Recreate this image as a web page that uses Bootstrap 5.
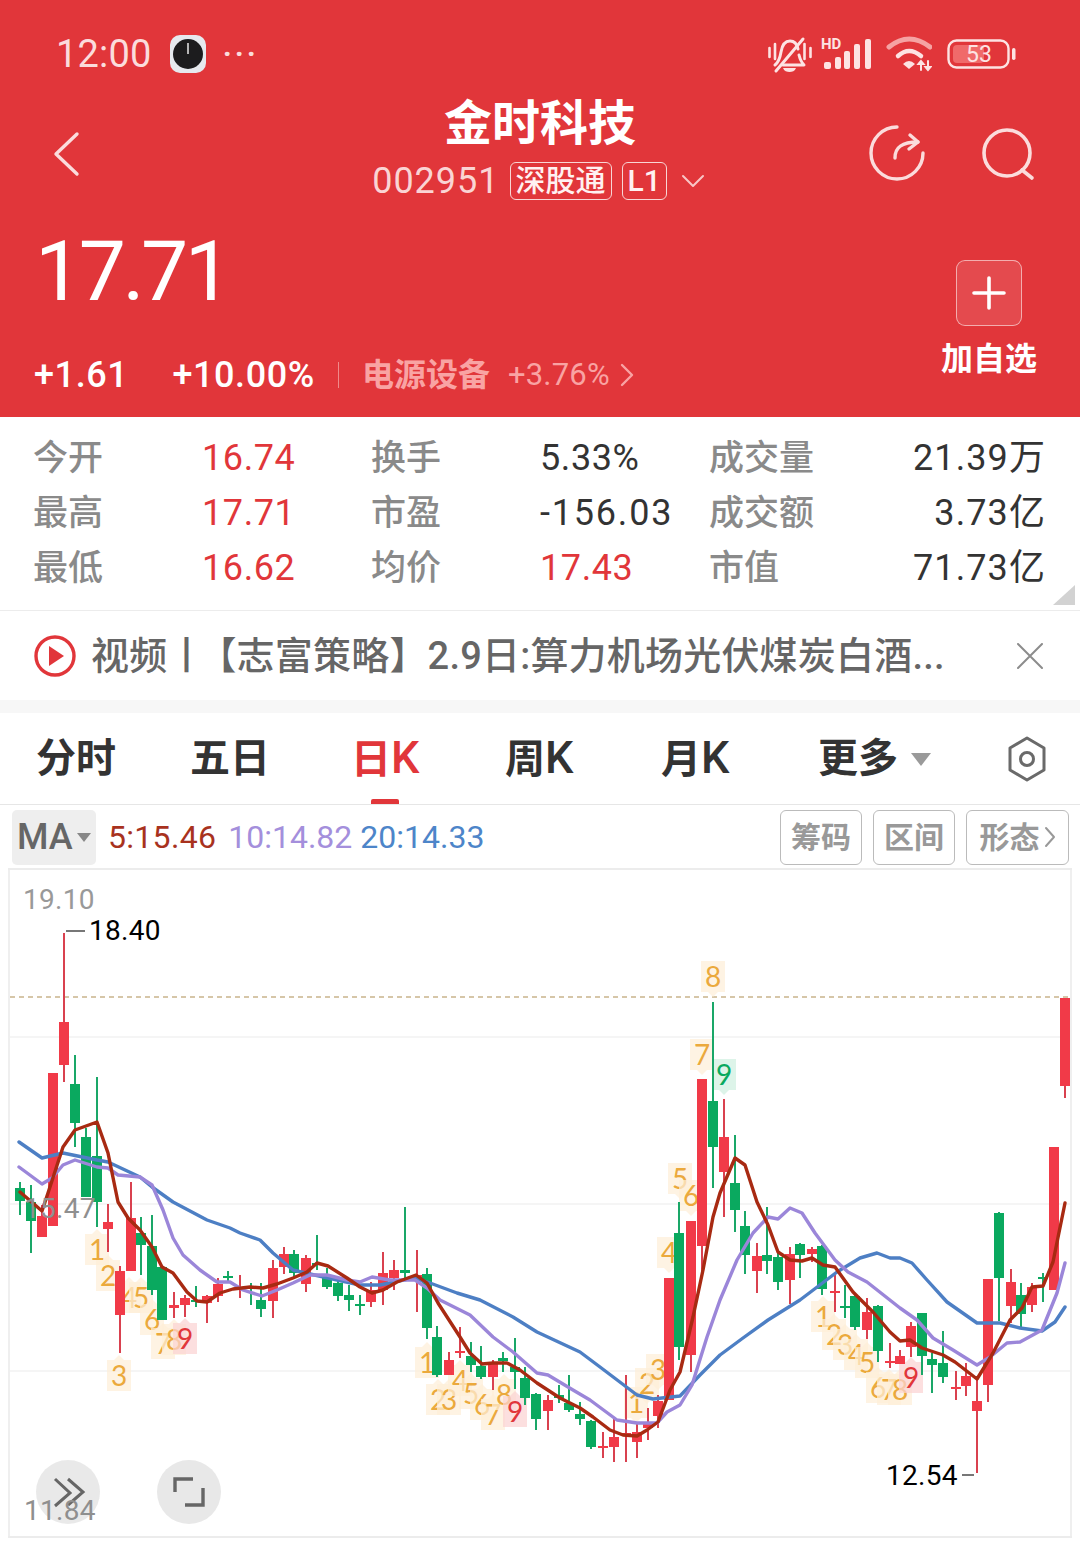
<!DOCTYPE html>
<html lang="zh-CN">
<head>
  <meta charset="UTF-8">
  <title>金时科技 002951</title>
  <meta name="viewport" content="width=device-width, initial-scale=1">
  <link href="https://cdn.jsdelivr.net/npm/bootstrap@5.3.0/dist/css/bootstrap.min.css" rel="stylesheet">
  <style>
    body { margin: 0; width: 1080px; height: 1543px; overflow: hidden; background: #fff;
      font-family: Roboto, "Noto Sans CJK SC", sans-serif; }
    svg { display: block; flex: none; }
    .head-wrap { height: 417px; background: #e1363a; color: #fff; }
    .status-row { height: 103px; padding: 5px 64px 0 56px; color: #fbdcdc; }
    .status-time { font-size: 38px; line-height: 1; letter-spacing: .2px; margin-right: 18px; }
    .status-dots { font-size: 30px; line-height: 1; letter-spacing: 3px; margin-left: 17px; font-weight: 700; }
    .clock-ico { width: 36px; height: 38px; background: #e6e9ee; border-radius: 10px; }
    .batt-ico { margin-left: 14px; }
    .nav-row { height: 102px; padding: 0 44px 0 52px; }
    .nav-side { width: 170px; }
    .nav-btns { gap: 56px; }
    .nav-mid { flex: 1; text-align: center; }
    .stock-name { font-size: 48px; font-weight: 700; line-height: 50px; margin: -8px 0 11px; padding-right: 8px; }
    .sub-row { height: 42px; gap: 10px; padding-right: 11px; color: #fad4d4; }
    .stock-code { font-size: 36px; letter-spacing: 1px; line-height: 1; }
    .tag-box { border: 1px solid #f8d5d5; border-radius: 6px; height: 38px; padding: 0 5px;
      font-size: 30px; line-height: 35px; color: #fff1f1; font-weight: 500; }
    .price-wrap { height: 212px; padding: 0 42px 0 34px; }
    .price-big { font-size: 84px; line-height: 1; letter-spacing: -3.5px; margin: 25px 0 0 1px; }
    .change-row { height: 42px; margin-top: 40px; }
    .chg-a { font-size: 36px; line-height: 42px; letter-spacing: .6px; font-weight: 500; }
    .chg-first { margin-right: 44px; }
    .chg-sep { width: 1px; height: 26px; background: #f08a8a; margin: 0 23px; }
    .plate-name { font-size: 32px; font-weight: 700; color: #f9a3a3; line-height: 42px; margin-right: 18px; }
    .plate-pct { font-size: 31px; color: #f9a3a3; line-height: 42px; margin-right: 10px; letter-spacing: .2px; }
    .add-box { width: 96px; padding-top: 55px; margin-right: 1px; }
    .add-btn { width: 66px; height: 66px; background: rgba(255,255,255,.1); border: 1px solid rgba(255,255,255,.55);
      border-radius: 9px; }
    .add-text { font-size: 32px; font-weight: 700; line-height: 34px; margin-top: 16px; white-space: nowrap; }
    .stat-wrap { position: relative; height: 194px; padding: 14px 0 0 33px; border-bottom: 1px solid #ececec; }
    .stat-row { height: 55px; }
    .stat-lab { width: 169px; font-size: 35px; font-weight: 500; color: #8a8a8a; line-height: 55px; }
    .stat-val { width: 169px; font-size: 36px; color: #333; line-height: 55px; letter-spacing: .6px; }
    .stat-wide { letter-spacing: 1.8px; }
    .stat-end { width: 169px; text-align: right; font-size: 36px; color: #333; line-height: 55px; letter-spacing: 1.1px; white-space: nowrap; }
    .stat-end-lab { width: 168px; }
    .stat-red { color: #e1363a; }
    .fold-mark { position: absolute; right: 5px; bottom: 5px; width: 22px; height: 20px; background: #d2d2d2;
      clip-path: polygon(100% 0, 100% 100%, 0 100%); }
    .news-row { height: 89px; padding: 0 37px 0 34px; }
    .news-text { flex: 1; font-size: 38px; font-weight: 500; color: #666; margin-left: 15px; white-space: nowrap; line-height: 92px; letter-spacing: .2px; }
    .news-bar { letter-spacing: -7px; }
    .band-gap { height: 13px; background: #f7f7f7; }
    .tabs-row { position: relative; height: 92px; border-bottom: 1px solid #e6e6e6; padding-left: 36px; }
    .tab-item { font-size: 40px; font-weight: 700; color: #333; line-height: 90px; width: 154px; white-space: nowrap; }
    .tab-k { font-size: 45px; font-weight: 500; }
    .tab-on { color: #e1363a; margin-left: 7px; }
    .tab-moon { margin-left: 2px; }
    .tab-more { width: 189px; margin-left: 3px; }
    .tab-tri { margin-left: 12px; }
    .tab-bar { position: absolute; left: 371px; bottom: 0; width: 28px; height: 5px; background: #e1363a; border-radius: 2px 2px 0 0; }
    .ma-row { height: 63px; padding: 4px 11px 3px 12px; }
    .ma-btn { width: 84px; height: 55px; background: #eee; border-radius: 5px; color: #666; font-size: 36px; font-weight: 500; line-height: 55px; padding-left: 5px; }
    .ma-vals { flex: 1; font-size: 32px; margin-left: 12px; line-height: 55px; }
    .ma-five { color: #a8321e; margin-right: 12px; letter-spacing: .3px; }
    .ma-ten { color: #a48fdc; margin-right: 8px; }
    .ma-twenty { color: #4d85c9; }
    .tool-btn { height: 55px; border: 1px solid #bbb; border-radius: 6px; color: #999; font-size: 30px; font-weight: 700; line-height: 53px; text-align: center; width: 82px; margin-left: 11px; white-space: nowrap; }
    .tool-wide { width: 103px; }
    .chart-area { height: 675px; }
    .num-tag { font-family: Lato, Roboto, sans-serif; font-size: 28px; }
    .axis-txt { font-family: Roboto, sans-serif; font-size: 28px; letter-spacing: .3px; }
  </style>
</head>
<body>
  <div class="head-wrap">
    <!-- status bar -->
    <div class="status-row d-flex align-items-center">
      <span class="status-time">12:00</span>
      <span class="clock-ico d-flex align-items-center justify-content-center">
        <svg width="30" height="30" viewBox="0 0 30 30"><circle cx="15" cy="15" r="15" fill="#1c1c1e"/><path d="M15 4v11" stroke="#ddd" stroke-width="1.6"/></svg>
      </span>
      <span class="status-dots">···</span>
      <span class="ms-auto d-flex align-items-center">
        <svg width="44" height="40" viewBox="0 0 44 40" fill="none" stroke="#fde3e3" stroke-width="3" stroke-linecap="round" stroke-linejoin="round">
          <path d="M7 31c4-3 5-7 6-13 1-6 4-11 9-11 4 0 7 3 8 8M31 21c1 4 2 7 5 10H15"/><path d="M35 5 8 37"/>
          <path d="M15 34h13c-1 3-4 4-6.500 4s-5.500-1-6.500-4z" fill="#fde3e3" stroke="none"/>
          <path d="M1.500 14v9M7 10v15M36.500 10v15M42.500 14v9" stroke-width="2.600"/>
        </svg>
        <svg class="ms-2" width="56" height="40" viewBox="0 0 56 40">
          <text x="1" y="15" font-size="15" font-weight="700" fill="#fde3e3" font-family="Roboto, sans-serif">HD</text>
          <g fill="#fde3e3"><rect x="4" y="28" width="7" height="7" rx="2"/><rect x="15" y="23" width="6" height="12" rx="2"/><rect x="24" y="17" width="6" height="18" rx="2"/><rect x="34" y="10" width="6" height="25" rx="2"/><rect x="45" y="5" width="6" height="30" rx="2"/></g>
        </svg>
        <svg class="ms-2" width="48" height="38" viewBox="-3 0 48 38" fill="none" stroke-linecap="round">
          <path d="M2 12Q22-4 43 12" stroke="#f5a3a3" stroke-width="5"/>
          <path d="M11 21Q22 11 34 21" stroke="#fde3e3" stroke-width="4.500"/>
          <path d="M16 29q6-6 12 0l-6 5z" fill="#fde3e3"/>
          <path d="M34 26l-2.500 3h5zM34 29v6M41 35l-2.500-3h5zM41 26v6" stroke="#fde3e3" stroke-width="2"/>
        </svg>
        <svg class="batt-ico" width="70" height="30" viewBox="0 0 70 30">
          <rect x="2.500" y="1.500" width="60" height="27" rx="8" fill="none" stroke="#fde3e3" stroke-width="2.400"/>
          <rect x="7" y="6" width="31" height="18" rx="4" fill="#f06a6a"/>
          <rect x="66" y="9" width="3.500" height="12" rx="1.700" fill="#fde3e3"/>
          <text x="33" y="23" text-anchor="middle" font-size="23" fill="#fde3e3" font-family="Roboto, sans-serif">53</text>
        </svg>
      </span>
    </div>
    <!-- title row -->
    <div class="nav-row d-flex align-items-center">
      <div class="nav-side"><svg width="30" height="46" viewBox="0 0 30 46" fill="none" stroke="#fbdcdc" stroke-width="3.4" stroke-linecap="round" stroke-linejoin="round"><path d="M25 3 4 23l21 20"/></svg></div>
      <div class="nav-mid">
        <div class="stock-name">金时科技</div>
        <div class="sub-row d-flex align-items-center justify-content-center">
          <span class="stock-code">002951</span>
          <span class="tag-box">深股通</span>
          <span class="tag-box">L1</span>
          <svg class="ms-1" width="24" height="16" viewBox="0 0 24 16" fill="none" stroke="#f8c6c6" stroke-width="2" stroke-linecap="round" stroke-linejoin="round"><path d="M2 3l10 10L22 3"/></svg>
        </div>
      </div>
      <div class="nav-side nav-btns d-flex justify-content-end align-items-center">
        <svg width="58" height="58" viewBox="0 1 58 58" fill="none" stroke="#fbdcdc" stroke-width="3.4" stroke-linecap="round" stroke-linejoin="round">
          <path d="M29 3A26 26 0 1 0 55 29"/><path d="M27 34C27 24 33 18 50 18"/><path d="M42 11l8 7-9 7"/>
        </svg>
        <svg width="54" height="58" viewBox="0 0 54 58" fill="none" stroke="#fbdcdc" stroke-width="3.6" stroke-linecap="round"><circle cx="25" cy="28" r="23"/><path d="M40 45l10 8"/></svg>
      </div>
    </div>
    <!-- price + add -->
    <div class="price-wrap d-flex justify-content-between">
      <div>
        <div class="price-big">17.71</div>
        <div class="change-row d-flex align-items-center">
          <span class="chg-a chg-first">+1.61</span>
          <span class="chg-a">+10.00%</span>
          <span class="chg-sep"></span>
          <span class="plate-name">电源设备</span>
          <span class="plate-pct">+3.76%</span>
          <svg width="14" height="24" viewBox="0 0 14 24" fill="none" stroke="#f9a3a3" stroke-width="2.4" stroke-linecap="round" stroke-linejoin="round"><path d="M2 2l10 10L2 22"/></svg>
        </div>
      </div>
      <div class="add-box d-flex flex-column align-items-center">
        <div class="add-btn d-flex align-items-center justify-content-center">
          <svg width="34" height="34" viewBox="0 0 34 34" stroke="#fff" stroke-width="3.6" stroke-linecap="round"><path d="M17 2v30M2 17h30"/></svg>
        </div>
        <div class="add-text">加自选</div>
      </div>
    </div>
  </div>

  <!-- quote table -->
  <div class="stat-wrap">
    <div class="stat-row d-flex">
      <span class="stat-lab">今开</span><span class="stat-val stat-red">16.74</span>
      <span class="stat-lab">换手</span><span class="stat-val">5.33%</span>
      <span class="stat-lab stat-end-lab">成交量</span><span class="stat-end">21.39万</span>
    </div>
    <div class="stat-row d-flex">
      <span class="stat-lab">最高</span><span class="stat-val stat-red">17.71</span>
      <span class="stat-lab">市盈</span><span class="stat-val stat-wide">-156.03</span>
      <span class="stat-lab stat-end-lab">成交额</span><span class="stat-end">3.73亿</span>
    </div>
    <div class="stat-row d-flex">
      <span class="stat-lab">最低</span><span class="stat-val stat-red">16.62</span>
      <span class="stat-lab">均价</span><span class="stat-val stat-red">17.43</span>
      <span class="stat-lab stat-end-lab">市值</span><span class="stat-end">71.73亿</span>
    </div>
    <div class="fold-mark"></div>
  </div>

  <!-- news strip -->
  <div class="news-row d-flex align-items-center">
    <svg width="42" height="42" viewBox="0 0 42 42" fill="none"><circle cx="21" cy="21" r="19" stroke="#e1363a" stroke-width="3.4"/><path d="M15 11l15 10-15 10z" fill="#e1363a"/></svg>
    <span class="news-text">视频<span class="news-bar">丨</span>【志富策略】2.9日:算力机场光伏煤炭白酒...</span>
    <svg width="26" height="26" viewBox="0 0 26 26" stroke="#8c8c8c" stroke-width="2" stroke-linecap="round"><path d="M1 1l24 24M25 1 1 25"/></svg>
  </div>
  <div class="band-gap"></div>

  <!-- period tabs -->
  <div class="tabs-row d-flex align-items-center">
    <span class="tab-item">分时</span>
    <span class="tab-item">五日</span>
    <span class="tab-item tab-on">日<span class="tab-k">K</span></span>
    <span class="tab-item">周<span class="tab-k">K</span></span>
    <span class="tab-item tab-moon">月<span class="tab-k">K</span></span>
    <span class="tab-item tab-more d-flex align-items-center">更多<svg class="tab-tri" width="22" height="14" viewBox="0 0 22 14"><path d="M1 1h20l-10 13z" fill="#9a9a9a"/></svg></span>
    <svg width="40" height="46" viewBox="0 0 40 46" fill="none" stroke="#6a6a6a" stroke-width="3" stroke-linejoin="round"><path d="M20 2l17 10v22L20 44 3 34V12z"/><circle cx="20" cy="23" r="6.500"/></svg>
    <div class="tab-bar"></div>
  </div>

  <!-- MA legend -->
  <div class="ma-row d-flex align-items-center">
    <div class="ma-btn d-flex align-items-center">MA<svg class="ms-1" width="14" height="9" viewBox="0 0 14 9"><path d="M0 0h14L7 9z" fill="#888"/></svg></div>
    <div class="ma-vals"><span class="ma-five">5:15.46</span><span class="ma-ten">10:14.82</span><span class="ma-twenty">20:14.33</span></div>
    <div class="tool-btn">筹码</div>
    <div class="tool-btn">区间</div>
    <div class="tool-btn tool-wide d-flex align-items-center justify-content-center">形态<svg class="ms-1" width="12" height="22" viewBox="0 0 12 22" fill="none" stroke="#999" stroke-width="2" stroke-linecap="round" stroke-linejoin="round"><path d="M2 2l8 9-8 9"/></svg></div>
  </div>

  <!-- k-line chart, all numbers are page pixels -->
  <div class="chart-area">
    <svg id="klineSvg" width="1080" height="675" viewBox="0 868 1080 675"></svg>
  </div>

  <script>
    // x, wick top, wick bottom, body top, body bottom, color
    const candles = [
      [20,1182,1215,1188,1201,'g'],[31,1185,1253,1202,1221,'g'],[42,1205,1237,1216,1237,'r'],[53,1073,1226,1073,1226,'r'],
      [64,933,1082,1022,1065,'r'],[75,1055,1147,1084,1123,'g'],[86,1128,1197,1137,1197,'g'],[97,1077,1227,1156,1202,'g'],
      [108,1204,1252,1222,1229,'r'],[120,1266,1353,1271,1315,'r'],[131,1182,1271,1218,1271,'r'],[141,1217,1275,1233,1245,'g'],
      [152,1215,1295,1246,1290,'g'],[162,1267,1320,1267,1320,'g'],[174,1292,1318,1305,1308,'r'],[185,1295,1317,1298,1305,'r'],
      [196,1286,1307,1300,1302,'g'],[207,1295,1323,1296,1303,'r'],[218,1278,1302,1284,1296,'r'],[228,1271,1283,1276,1278,'g'],
      [240,1275,1298,1287,1289,'r'],[251,1283,1305,1286,1288,'g'],[261,1283,1317,1300,1309,'g'],[273,1260,1318,1268,1301,'r'],
      [284,1247,1274,1254,1267,'r'],[294,1250,1277,1254,1273,'g'],[306,1255,1292,1258,1284,'r'],[317,1235,1270,1263,1265,'g'],
      [327,1268,1289,1277,1287,'g'],[338,1277,1301,1283,1296,'g'],[349,1285,1311,1295,1300,'g'],[360,1295,1315,1304,1306,'g'],
      [371,1282,1307,1290,1302,'r'],[383,1252,1305,1273,1290,'r'],[394,1260,1290,1270,1278,'r'],[405,1207,1278,1270,1273,'g'],
      [417,1250,1312,1275,1278,'r'],[427,1268,1339,1274,1328,'g'],[437,1326,1377,1337,1375,'g'],[449,1352,1375,1360,1375,'r'],
      [460,1327,1358,1351,1353,'r'],[471,1342,1372,1356,1365,'g'],[481,1346,1379,1366,1377,'g'],[493,1360,1390,1363,1377,'r'],
      [503,1352,1372,1358,1361,'g'],[515,1338,1389,1367,1372,'g'],[525,1367,1405,1378,1398,'g'],[536,1393,1430,1394,1419,'g'],
      [548,1395,1430,1400,1411,'r'],[559,1385,1403,1395,1398,'g'],[569,1375,1412,1403,1410,'g'],[580,1402,1425,1414,1419,'g'],
      [591,1420,1449,1421,1447,'g'],[603,1432,1458,1446,1448,'r'],[614,1417,1462,1437,1447,'r'],[626,1375,1462,1433,1435,'r'],
      [637,1423,1458,1432,1442,'r'],[648,1408,1440,1423,1428,'r'],[658,1395,1428,1401,1416,'r'],[669,1278,1400,1278,1400,'r'],
      [679,1202,1360,1233,1347,'g'],[691,1221,1372,1221,1355,'r'],[702,1079,1273,1079,1246,'r'],[713,1002,1188,1101,1147,'g'],
      [724,1099,1217,1137,1172,'r'],[735,1135,1232,1183,1210,'g'],[745,1211,1274,1226,1255,'g'],[757,1243,1293,1256,1271,'r'],
      [767,1207,1274,1255,1261,'g'],[778,1250,1290,1257,1282,'g'],[790,1247,1304,1254,1280,'r'],[800,1243,1278,1244,1255,'g'],
      [812,1247,1262,1249,1254,'r'],[822,1245,1295,1246,1289,'g'],[835,1275,1312,1291,1293,'r'],[845,1285,1318,1306,1308,'g'],
      [855,1295,1330,1296,1327,'g'],[867,1298,1339,1312,1330,'r'],[878,1305,1362,1306,1351,'g'],[890,1343,1368,1361,1363,'r'],
      [900,1350,1363,1356,1364,'r'],[911,1322,1357,1326,1347,'r'],[922,1313,1375,1313,1356,'g'],[932,1353,1393,1359,1365,'g'],
      [943,1331,1383,1363,1377,'g'],[956,1371,1400,1387,1389,'r'],[966,1363,1396,1376,1386,'r'],[977,1380,1473,1401,1411,'r'],
      [988,1279,1402,1279,1385,'r'],[999,1212,1321,1213,1278,'g'],[1011,1269,1323,1282,1306,'r'],[1021,1283,1327,1295,1314,'g'],
      [1032,1283,1312,1287,1305,'r'],[1043,1273,1302,1277,1279,'g'],[1054,1147,1290,1147,1290,'r'],[1065,998,1098,998,1086,'r']
    ];
    const ma5 = [[20,1192],[42,1211],[48,1193],[63,1147],[75,1130],[97,1122],[108,1153],[118,1202],[128,1218],[140,1230],[152,1247],[162,1267],[173,1273],[187,1292],[197,1301],[207,1302],[220,1293],[233,1289],[250,1287],[263,1288],[277,1284],[293,1278],[307,1272],[317,1263],[328,1266],[347,1278],[360,1287],[372,1293],[383,1290],[397,1282],[416,1275],[427,1283],[438,1303],[460,1337],[470,1353],[482,1364],[493,1363],[507,1363],[520,1370],[537,1383],[560,1398],[580,1408],[593,1417],[610,1430],[623,1435],[637,1436],[647,1430],[658,1422],[670,1390],[680,1372],[693,1317],[703,1270],[713,1217],[720,1193],[735,1158],[745,1165],[757,1202],[768,1225],[778,1252],[790,1260],[802,1261],[812,1258],[823,1265],[835,1267],[853,1292],[873,1312],[890,1332],[900,1341],[910,1340],[922,1348],[943,1355],[955,1362],[977,1379],[993,1353],[1010,1320],[1022,1308],[1032,1287],[1043,1286],[1053,1262],[1065,1203]];
    const ma10 = [[19,1167],[42,1184],[52,1178],[63,1165],[75,1160],[97,1167],[108,1168],[118,1175],[140,1177],[152,1185],[163,1210],[173,1238],[183,1255],[200,1270],[217,1282],[230,1282],[243,1290],[262,1296],[277,1290],[293,1283],[310,1275],[327,1275],[347,1280],[360,1282],[372,1277],[390,1280],[415,1280],[427,1288],[440,1300],[470,1315],[493,1337],[513,1352],[537,1373],[548,1375],[573,1390],[590,1400],[617,1420],[637,1423],[657,1423],[667,1412],[680,1405],[692,1385],[707,1337],[720,1300],[737,1260],[753,1233],[768,1217],[778,1219],[790,1208],[802,1213],[815,1233],[835,1260],[848,1272],[867,1282],[900,1308],[917,1320],[933,1338],[953,1350],[977,1365],[990,1357],[1007,1343],[1020,1342],[1042,1330],[1057,1293],[1065,1263]];
    const ma20 = [[19,1142],[42,1158],[63,1153],[97,1160],[108,1162],[140,1177],[152,1187],[173,1202],[207,1220],[230,1228],[240,1233],[260,1240],[273,1253],[293,1270],[310,1274],[360,1285],[380,1285],[413,1278],[430,1283],[457,1293],[480,1300],[513,1317],[537,1332],[580,1352],[600,1367],[637,1395],[653,1399],[680,1396],[700,1375],[720,1355],[743,1338],[768,1320],[800,1300],[837,1272],[860,1258],[877,1253],[890,1258],[900,1258],[912,1263],[927,1280],[947,1302],[977,1323],[1000,1323],[1020,1328],[1042,1331],[1055,1322],[1065,1307]];
    // x, y, digit, kind (o orange, r red, g green), pointer direction
    const tags = [
      [97,1250,'1','o',-1],[108,1276,'2','o',-1],[119,1376,'3','o',-1],[129,1298,'4','o',-1],[141,1298,'5','o',-1],[152,1320,'6','o',-1],[163,1344,'7','o',-1],[174,1340,'8','o',-1],[185,1339,'9','r',-1],
      [427,1363,'1','o',-1],[438,1400,'2','o',-1],[449,1400,'3','o',-1],[460,1381,'4','o',-1],[471,1394,'5','o',-1],[482,1405,'6','o',-1],[493,1415,'7','o',-1],[504,1395,'8','o',-1],[515,1412,'9','r',-1],
      [636,1403,'1','o',1],[647,1384,'2','o',1],[658,1370,'3','o',1],[669,1253,'4','o',1],[680,1179,'5','o',1],[691,1196,'6','o',1],[702,1055,'7','o',1],[713,977,'8','o',1],[724,1075,'9','g',1],
      [823,1317,'1','o',-1],[834,1335,'2','o',-1],[845,1345,'3','o',-1],[856,1355,'4','o',-1],[867,1363,'5','o',-1],[878,1388,'6','o',-1],[889,1390,'7','o',-1],[900,1390,'8','o',-1],[911,1378,'9','r',-1]
    ];

    const svg = document.getElementById('klineSvg');
    const NS = 'http://www.w3.org/2000/svg';
    function add(name, attrs, text) {
      const el = document.createElementNS(NS, name);
      Object.keys(attrs).forEach(k => el.setAttribute(k, attrs[k]));
      if (text) el.textContent = text;
      svg.appendChild(el);
      return el;
    }
    function line(x1, y1, x2, y2, color, w, dash) {
      const a = { x1, y1, x2, y2, stroke: color, 'stroke-width': w };
      if (dash) a['stroke-dasharray'] = dash;
      add('line', a);
    }

    // frame and grid
    line(9, 868, 9, 1537, '#efefef', 2);
    line(1071, 868, 1071, 1537, '#efefef', 2);
    line(8, 869, 1072, 869, '#ececec', 2);
    line(8, 1537, 1072, 1537, '#ececec', 2);
    [1037, 1204, 1371].forEach(y => line(10, y, 1070, y, '#f2f2f2', 1.6));
    line(10, 997, 1070, 997, '#c9b48c', 1.6, '5 4');

    // number tags sit under the candles, bg is see-through so older digits still show
    const tagColor = { o: ['#fdeed8', '#eba93c'], r: ['#fbd3d3', '#e1363a'], g: ['#d0f0e0', '#0aa95f'] };
    tags.forEach(t => {
      const c = tagColor[t[3]];
      const tip = t[4] < 0 ? t[1] - 21 : t[1] + 20;
      const base = t[4] < 0 ? t[1] - 16 : t[1] + 15;
      add('path', { d: 'M' + (t[0] - 12) + ' ' + (t[1] - 16) + 'h24v31h-24z', fill: c[0], opacity: .72 });
      add('path', { d: 'M' + (t[0] - 5) + ' ' + base + 'L' + t[0] + ' ' + tip + 'L' + (t[0] + 5) + ' ' + base + 'z', fill: c[0], opacity: .72 });
      add('text', { x: t[0], y: t[1] + 10, 'text-anchor': 'middle', fill: c[1], class: 'num-tag' }, t[2]);
    });

    const red = '#f13a48', green = '#0aa95f';
    candles.forEach(k => {
      const col = k[5] === 'r' ? red : green;
      line(k[0], k[1], k[0], k[2], k[5] === 'r' ? '#d9414f' : '#1aa768', 2);
      add('rect', { x: k[0] - 5, y: k[3], width: 10, height: Math.max(k[4] - k[3], 2), fill: col });
    });

    function maLine(pts, color) {
      add('polyline', { points: pts.map(p => p.join(',')).join(' '), fill: 'none', stroke: color, 'stroke-width': 3.4, 'stroke-linejoin': 'round', 'stroke-linecap': 'round' });
    }
    maLine(ma20, '#4d7fc4');
    maLine(ma10, '#9b86d9');
    maLine(ma5, '#a82a12');

    // axis and extreme labels
    add('text', { x: 23, y: 909, fill: '#999', class: 'axis-txt' }, '19.10');
    add('text', { x: 24, y: 1218, fill: '#8f8f8f', class: 'axis-txt' }, '15.47');
    line(66, 931, 85, 931, '#777', 2);
    add('text', { x: 89, y: 940, fill: '#000', class: 'axis-txt' }, '18.40');
    line(962, 1475, 974, 1475, '#777', 2);
    add('text', { x: 886, y: 1485, fill: '#000', class: 'axis-txt' }, '12.54');

    // floating round buttons
    add('circle', { cx: 68, cy: 1492, r: 32, fill: '#e8e8e8', opacity: .95 });
    add('circle', { cx: 189, cy: 1492, r: 32, fill: '#e8e8e8' });
    add('path', { d: 'M55 1479l15 14-15 13M68 1479l15 13-15 13', fill: 'none', stroke: '#666', 'stroke-width': 3 });
    add('path', { d: 'M175 1492v-13h18M203 1488v17h-18', fill: 'none', stroke: '#666', 'stroke-width': 3.4 });
    add('text', { x: 24, y: 1520, fill: '#8f8f8f', class: 'axis-txt' }, '11.84');
  </script>
  <script src="https://cdn.jsdelivr.net/npm/bootstrap@5.3.0/dist/js/bootstrap.bundle.min.js"></script>
</body>
</html>
